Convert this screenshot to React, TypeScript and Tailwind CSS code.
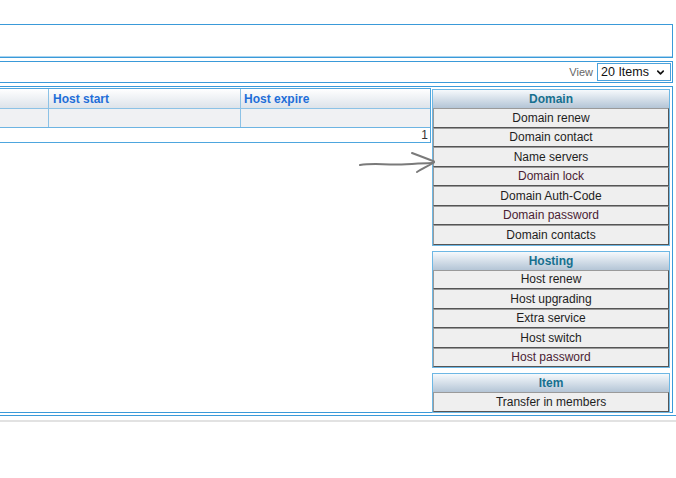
import { ChevronDown } from "lucide-react";

type Action = { label: string; visited?: boolean };

const groups: { title: string; items: Action[] }[] = [
  {
    title: "Domain",
    items: [
      { label: "Domain renew" },
      { label: "Domain contact" },
      { label: "Name servers" },
      { label: "Domain lock", visited: true },
      { label: "Domain Auth-Code" },
      { label: "Domain password", visited: true },
      { label: "Domain contacts" },
    ],
  },
  {
    title: "Hosting",
    items: [
      { label: "Host renew" },
      { label: "Host upgrading" },
      { label: "Extra service" },
      { label: "Host switch" },
      { label: "Host password", visited: true },
    ],
  },
  {
    title: "Item",
    items: [{ label: "Transfer in members" }],
  },
];

function ActionGroup({ title, items }: { title: string; items: Action[] }) {
  return (
    <div className="border border-[#6db7e4]">
      <div className="h-[18px] flex items-center justify-center bg-gradient-to-b from-[#f6f9fc] to-[#b4c5d6] font-bold text-[#17708f]">
        {title}
      </div>
      {items.map((it) => (
        <button
          key={it.label}
          className={`w-full h-[19.5px] flex items-center justify-center bg-[#efefef] border border-t-[#9a9a9a] border-l-[#9a9a9a] border-r-[#555] border-b-[#555] ${
            it.visited ? "text-[#4a1d33]" : "text-[#1e1e1e]"
          }`}
        >
          {it.label}
        </button>
      ))}
    </div>
  );
}

export default function App() {
  return (
    <div className="relative w-[676px] h-[478px] bg-white font-['Liberation_Sans',Arial,sans-serif] text-[12px] leading-none">
      <div className="pt-[24px] pr-[3px]">
        {/* search panel */}
        <div className="h-[34px] border border-l-0 border-[#3a9ad9] shadow-[inset_0_-1px_0_#a8d4f0]" />

        {/* toolbar */}
        <div className="mt-[3px] h-[22px] border border-l-0 border-[#3a9ad9] flex items-center justify-end gap-[4px] pr-[1px]">
          <span className="text-[11px] text-[#666]">View</span>
          <div className="w-[74px] h-[18px] border border-[#4aa2dc] flex items-center justify-between pl-[3px] pr-[4px] text-[12.5px] text-[#111]">
            <span>20 Items</span>
            <ChevronDown size={11} strokeWidth={3.5} className="text-[#111]" />
          </div>
        </div>

        {/* list + side actions */}
        <div className="mt-[3px] h-[327px] border border-l-0 border-[#3a9ad9] flex items-start pt-[1px]">
          <div className="w-[431px] border border-l-0 border-[#4ea6de]">
            <div className="flex h-[20px] bg-gradient-to-b from-white to-[#dde3ea] border-b border-[#8cc2e6] font-bold text-[#1f6ed8]">
              <div className="w-[49px] border-r border-[#8cc2e6]" />
              <div className="w-[192px] border-r border-[#8cc2e6] flex items-center pl-[4px]">Host start</div>
              <div className="flex-1 flex items-center pl-[3px]">Host expire</div>
            </div>
            <div className="flex h-[19px] bg-[#f0f1f3] border-b border-[#6db4e2]">
              <div className="w-[49px] border-r border-[#8cc2e6]" />
              <div className="w-[192px] border-r border-[#8cc2e6]" />
              <div className="flex-1" />
            </div>
            <div className="h-[14px] flex items-center justify-end pr-[2px] text-[#333]">1</div>
          </div>

          <div className="ml-[1px] w-[238px] flex flex-col gap-[5px] pt-[1px]">
            {groups.map((g) => (
              <ActionGroup key={g.title} title={g.title} items={g.items} />
            ))}
          </div>
        </div>
      </div>

      <div className="mt-[2px] h-[1px] bg-[#3a9ad9]" />
      <div className="mt-[4px] h-[2px] bg-[#e2e2e2]" />

      {/* hand-drawn pointer */}
      <svg
        className="absolute left-[356px] top-[148px]"
        width="84"
        height="30"
        viewBox="0 0 84 30"
        fill="none"
        stroke="#7a7a7a"
        strokeWidth="2"
        strokeLinecap="round"
        strokeLinejoin="round"
      >
        <path d="M4 17 C14 15.5 24 16 34 16.5 S58 15.5 76 15" />
        <path d="M56 5 C64 8 72 11 78 13.5" />
        <path d="M78 14.5 C72 18 66 21 61 24" />
      </svg>
    </div>
  );
}
